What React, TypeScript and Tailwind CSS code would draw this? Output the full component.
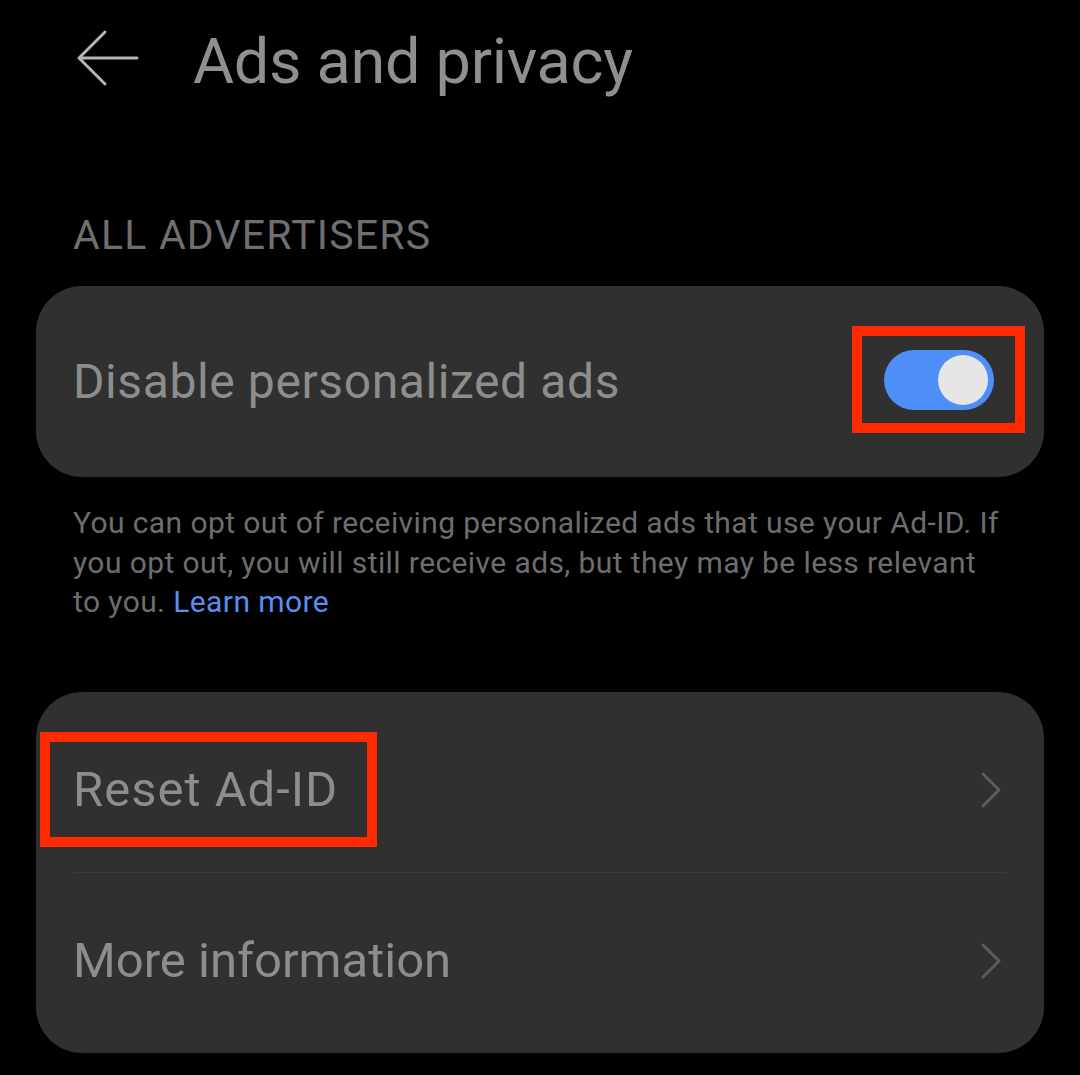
import React from "react";

const font = { fontFamily: "Roboto, 'Noto Sans', sans-serif" };

function Chevron() {
  return (
    <svg width="22" height="36" viewBox="0 0 22 36" fill="none">
      <path d="M3 2 L19 18 L3 34" stroke="#5c5c5c" strokeWidth="3" strokeLinecap="round" strokeLinejoin="round" />
    </svg>
  );
}

export default function App() {
  return (
    <div className="w-[1080px] h-[1075px] bg-black overflow-hidden" style={font}>
      {/* Header */}
      <div className="flex items-center h-[118px] pl-[76px] pt-[4px]">
        <svg width="64" height="58" viewBox="0 0 64 58" fill="none" className="mt-[-6px]">
          <path d="M3 29 H61 M29 3 L3 29 L29 55" stroke="#b4b4b4" strokeWidth="3" strokeLinecap="round" strokeLinejoin="round" />
        </svg>
        <h1 className="ml-[53px] text-[63px] leading-none text-[#8f8f8f] font-normal tracking-[-0.3px]">Ads and privacy</h1>
      </div>

      {/* Section label */}
      <div className="pl-[73px] mt-[97px] text-[41px] leading-none text-[#6f6f6f] tracking-[1.2px]">ALL ADVERTISERS</div>

      {/* Toggle card */}
      <div className="mx-[36px] mt-[30px] h-[191px] rounded-[46px] bg-[#303030] flex items-center justify-between pl-[37px] pr-[19px]">
        <span className="text-[48px] text-[#8d8d8d] leading-none tracking-[0.6px]">Disable personalized ads</span>
        <div className="w-[173px] h-[107px] border-[10px] border-[#ff2a00] flex items-center justify-center mt-[-4px]">
          <div className="w-[110px] h-[60px] rounded-full bg-[#4d8ef7] flex items-center justify-end pr-[6px]">
            <div className="w-[50px] h-[50px] rounded-full bg-[#e6e6e6]" />
          </div>
        </div>
      </div>

      {/* Description */}
      <p className="pl-[73px] pr-[74px] mt-[26px] text-[30px] leading-[39.5px] text-[#6d6d6d] tracking-[0.4px]">
        You can opt out of receiving personalized ads that use your Ad-ID. If you opt out, you will still receive ads, but they may be less relevant to you.{" "}
        <span className="text-[#5b8def]">Learn more</span>
      </p>

      {/* Links card */}
      <div className="mx-[36px] mt-[70px] rounded-[46px] bg-[#303030] flex flex-col">
        <div className="h-[180px] flex items-center justify-between pl-[37px] pr-[42px] pt-[16px]">
          <div className="-ml-[33px] border-[10px] border-[#ff2a00] h-[115px] w-[337px] flex items-center pl-[23px]">
            <span className="text-[49px] text-[#8d8d8d] leading-none tracking-[1px]">Reset Ad-ID</span>
          </div>
          <Chevron />
        </div>
        <div className="mx-[37px] h-[1px] bg-[#3a3a3a]" />
        <div className="h-[180px] flex items-center justify-between pl-[37px] pr-[42px] pb-[4px]">
          <span className="text-[49px] text-[#8d8d8d] leading-none">More information</span>
          <Chevron />
        </div>
      </div>
    </div>
  );
}
